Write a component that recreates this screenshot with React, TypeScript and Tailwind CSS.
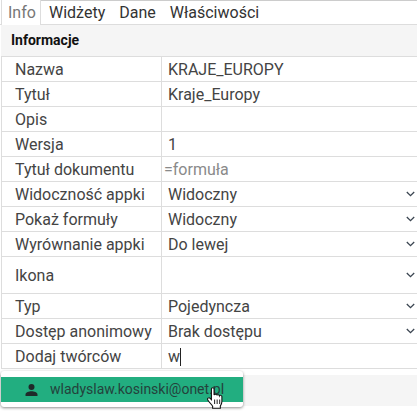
import React from "react"

const rows = [
  { label: "Nazwa", value: "KRAJE_EUROPY" },
  { label: "Tytuł", value: "Kraje_Europy" },
  { label: "Opis", value: "" },
  { label: "Wersja", value: "1" },
  { label: "Tytuł dokumentu", value: "=formuła", hint: true },
  { label: "Widoczność appki", value: "Widoczny", select: true },
  { label: "Pokaż formuły", value: "Widoczny", select: true },
  { label: "Wyrównanie appki", value: "Do lewej", select: true },
  { label: "Ikona", value: "", select: true, tall: true },
  { label: "Typ", value: "Pojedyncza", select: true },
  { label: "Dostęp anonimowy", value: "Brak dostępu", select: true },
]

const Chevron = () => (
  <svg width="9" height="6" viewBox="0 0 9 6" fill="none" className="absolute right-[2px] top-1/2 -translate-y-1/2">
    <path d="M0.8 1 L4.5 4.6 L8.2 1" stroke="#3a4450" strokeWidth="1.3" />
  </svg>
)

const Row = ({ label, children, tall }: { label: string; children: React.ReactNode; tall?: boolean }) => (
  <div className={`flex border-b border-[#dddddd] ${tall ? "h-[37px]" : "h-[25px]"}`}>
    <div className="w-[160px] shrink-0 border-r border-[#dddddd] pl-[13px] pt-[2px] flex items-center whitespace-nowrap">{label}</div>
    <div className="relative flex-1 pl-[6px] pt-[2px] flex items-center">{children}</div>
  </div>
)

export default function App() {
  return (
    <div className="relative w-[417px] h-[411px] overflow-hidden bg-white text-[16px] text-[#444444] font-['Roboto',sans-serif]">
      <div className="flex h-[25px] border-b border-[#dddddd]">
        <div className="ml-[1px] w-[40px] h-[25px] pl-[6px] border-x border-[#dddddd] text-[#777777] flex items-center bg-white">Info</div>
        <div className="flex-1 flex items-center border-t border-[#cccccc] pl-[8px] gap-[14px] text-[#333333]">
          <span>Widżety</span>
          <span>Dane</span>
          <span>Właściwości</span>
        </div>
      </div>

      <div className="h-[32px] ml-[1px] bg-[#f5f5f5] border-b border-[#dddddd] pl-[10px] flex items-center text-[14px] font-bold text-[#111111]">
        Informacje
      </div>

      <div className="ml-[1px] border-l border-[#dddddd]">
        {rows.map((r) => (
          <Row key={r.label} label={r.label} tall={r.tall}>
            <span className={r.hint ? "text-[#8a8a8a] -ml-[4px]" : ""}>{r.value}</span>
            {r.select && <Chevron />}
          </Row>
        ))}
        <Row label="Dodaj twórców">
          <span>w</span>
          <span className="w-px h-[18px] bg-[#222222]" />
        </Row>
      </div>

      <div className="mt-[6px] h-[31px] bg-[#f5f5f5]" />

      <div className="absolute left-[1px] top-[371px] w-[242px] h-[36px] pt-[6px] bg-white rounded-[3px] shadow-[0_1px_3px_rgba(0,0,0,0.45)]">
        <div className="h-[25px] bg-[#22ae80] flex items-center pl-[24px] text-[14px] text-[#24423c]">
          <svg width="13" height="12" viewBox="0 0 13 12" className="shrink-0">
            <circle cx="6.5" cy="3" r="3" fill="#1f2a2a" />
            <path d="M0.5 12v-1.5C0.5 8.3 4 7.2 6.5 7.2s6 1.1 6 3.3V12z" fill="#1f2a2a" />
          </svg>
          <span className="ml-[12px]">wladyslaw.kosinski@onet.pl</span>
        </div>
      </div>

      <svg width="16" height="23" viewBox="1.5 0.5 14.5 23" preserveAspectRatio="none" className="absolute left-[207px] top-[387px]">
        <path
          d="M5.5 2.2c0-1.4 2.4-1.4 2.4 0v6.3c.3-1 2.4-1 2.5.3.3-1 2.3-.8 2.4.5.4-.8 2.1-.6 2.2.8v4.9c0 2-.7 3.2-1.4 4.4v2.3H6.6v-2c-1-1.5-3.1-4.2-4.4-6.3-.9-1.5 1-2.8 2.2-1.5l1.1 1.3z"
          fill="#ffffff"
          stroke="#111111"
          strokeWidth="1"
        />
        <path d="M8.4 13v4.5M10.7 13v4.5M13 13v4.5" stroke="#111111" strokeWidth="0.9" />
      </svg>
    </div>
  )
}
